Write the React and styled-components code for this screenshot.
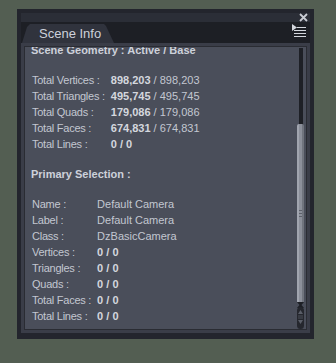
import React from "react";
import styled, { createGlobalStyle } from "styled-components";

const Global = createGlobalStyle`
  html, body { margin: 0; padding: 0; background: #535e52; }
  body { width: 336px; height: 363px; overflow: hidden; font-family: "Liberation Sans", Arial, sans-serif; }
`;

const Page = styled.div`
  padding: 9px 22px 24px 17px;
`;

const Window = styled.div`
  width: 297px;
  height: 330px;
  box-sizing: border-box;
  background: #23252d;
  padding: 4px 4px 6px 4px;
  display: flex;
  flex-direction: column;
`;

const TitleStrip = styled.div`
  height: 9px;
  background: #2b2e37;
  display: flex;
  justify-content: flex-end;
  align-items: center;
  padding-right: 2px;
`;

const TabRow = styled.div`
  height: 21px;
  background: #1d1f25;
  display: flex;
  align-items: flex-end;
  justify-content: space-between;
  padding-left: 1px;
  padding-right: 4px;
`;

const Tab = styled.div`
  width: 92px;
  height: 19px;
  background: #30333d;
  clip-path: polygon(0 100%, 5px 3px, 8px 0, 82px 0, 84px 2px, 92px 100%);
  color: #cdd1da;
  font-size: 13px;
  line-height: 19px;
  padding-left: 17px;
  box-sizing: border-box;
  white-space: nowrap;
`;

const MenuButton = styled.div`
  align-self: flex-start;
  margin-top: 2px;
  width: 14px;
  height: 14px;
  display: flex;
`;

const Panel = styled.div`
  flex: 1;
  background: #3a3d48;
  padding: 3px;
  display: flex;
  min-height: 0;
`;

const Inner = styled.div`
  flex: 1;
  border: 1px solid #2a2c33;
  background: #4a4e5a;
  display: flex;
  overflow: hidden;
`;

const ScrollArea = styled.div`
  flex: 1;
  overflow: hidden;
  padding-left: 6px;
`;

const ScrollContent = styled.div`
  margin-top: -5px;
  display: flex;
  flex-direction: column;
  gap: 14px;
`;

const Section = styled.div`
  display: flex;
  flex-direction: column;
  gap: 14px;
`;

const Heading = styled.div`
  font-size: 11px;
  font-weight: bold;
  line-height: 16px;
  color: #cdd1da;
  white-space: nowrap;
`;

const Table = styled.div`
  display: grid;
  grid-template-columns: auto 1fr;
  column-gap: 6px;
  font-size: 11px;
  line-height: 16px;
  padding-left: 1px;
`;

const Label = styled.div`
  color: #c3c7d1;
  white-space: nowrap;
  letter-spacing: -0.25px;
`;

const Value = styled.div`
  color: #c3c7d1;
  white-space: nowrap;
  font-weight: ${(p) => (p.$bold ? "bold" : "normal")};
  b { color: #d4d7de; font-weight: bold; }
`;

const Scrollbar = styled.div`
  width: 7px;
  margin: 1px 2px 0 0;
  display: flex;
  flex-direction: column;
  align-items: stretch;
`;

const Track = styled.div`
  height: 76px;
  display: flex;
  justify-content: center;
  div { width: 4px; background: #1e2026; margin-left: 1px; }
`;

const Thumb = styled.div`
  height: 178px;
  border-radius: 2px 2px 0 0;
  background: linear-gradient(to right, #a1a5af 0 2px, #8b8f9a 2px 5px, #70747e 5px);
  display: flex;
  flex-direction: column;
  align-items: center;
  justify-content: center;
  gap: 2px;
  span { width: 3px; height: 1px; background: #5c606a; }
`;

const ArrowButton = styled.div`
  height: 27px;
  display: flex;
`;

const CloseIcon = () => (
  <svg width="9" height="9" viewBox="0 0 9 9">
    <path d="M1 1 L8 8 M8 1 L1 8" stroke="#c9ccd4" strokeWidth="1.8" />
  </svg>
);

const MenuIcon = () => (
  <svg width="14" height="14" viewBox="0 0 14 14">
    <path d="M0 0 L5 3.5 L0 7 Z" fill="#d3d6dd" />
    <path d="M5 3.5 H14 M2 6.5 H14 M2 9.5 H14 M2 12.5 H14" stroke="#d3d6dd" strokeWidth="1" />
  </svg>
);

const ArrowIcon = () => (
  <svg width="7" height="27" viewBox="0 0 7 27">
    <path d="M0 0 L7 0 L4.5 3 L7 6 L0 6 L2.5 3 Z" fill="#1d1f25" />
    <rect x="0" y="5" width="7" height="22" rx="3.5" fill="#25272e" />
    <path d="M3.5 8 L6 12 L1 12 Z" fill="#5a5e68" />
    <path d="M1 14 H6 M1 16 H6" stroke="#4c5059" strokeWidth="1" />
    <path d="M1 18 L6 18 L3.5 22 Z" fill="#5a5e68" />
  </svg>
);

const geometry = [
  ["Total Vertices :", "898,203", "898,203"],
  ["Total Triangles :", "495,745", "495,745"],
  ["Total Quads :", "179,086", "179,086"],
  ["Total Faces :", "674,831", "674,831"],
  ["Total Lines :", "0", "0"],
];

const selectionText = [
  ["Name :", "Default Camera"],
  ["Label :", "Default Camera"],
  ["Class :", "DzBasicCamera"],
];

const selectionCounts = [
  ["Vertices :", "0", "0"],
  ["Triangles :", "0", "0"],
  ["Quads :", "0", "0"],
  ["Total Faces :", "0", "0"],
  ["Total Lines :", "0", "0"],
];

const CountValue = ({ a, b }) =>
  a === "0" && b === "0" ? (
    <Value $bold>
      <b>
        {a} / {b}
      </b>
    </Value>
  ) : (
    <Value>
      <b>{a}</b> / {b}
    </Value>
  );

export default function App() {
  return (
    <>
      <Global />
      <Page>
        <Window>
          <TitleStrip>
            <CloseIcon />
          </TitleStrip>
          <TabRow>
            <Tab>Scene Info</Tab>
            <MenuButton>
              <MenuIcon />
            </MenuButton>
          </TabRow>
          <Panel>
            <Inner>
              <ScrollArea>
                <ScrollContent>
                  <Section>
                    <Heading>Scene Geometry : Active / Base</Heading>
                    <Table>
                      {geometry.map(([l, a, b]) => (
                        <React.Fragment key={l}>
                          <Label>{l}</Label>
                          <CountValue a={a} b={b} />
                        </React.Fragment>
                      ))}
                    </Table>
                  </Section>
                  <Section>
                    <Heading>Primary Selection :</Heading>
                    <Table>
                      {selectionText.map(([l, v]) => (
                        <React.Fragment key={l}>
                          <Label>{l}</Label>
                          <Value>{v}</Value>
                        </React.Fragment>
                      ))}
                      {selectionCounts.map(([l, a, b]) => (
                        <React.Fragment key={l}>
                          <Label>{l}</Label>
                          <CountValue a={a} b={b} />
                        </React.Fragment>
                      ))}
                    </Table>
                  </Section>
                </ScrollContent>
              </ScrollArea>
              <Scrollbar>
                <Track>
                  <div />
                </Track>
                <Thumb>
                  <span />
                  <span />
                  <span />
                </Thumb>
                <ArrowButton>
                  <ArrowIcon />
                </ArrowButton>
              </Scrollbar>
            </Inner>
          </Panel>
        </Window>
      </Page>
    </>
  );
}
